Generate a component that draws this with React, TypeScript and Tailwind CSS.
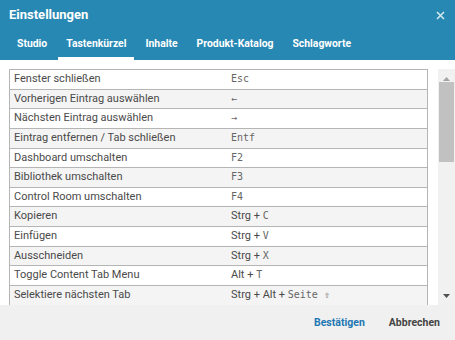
const shortcuts: { label: string; keys: React.ReactNode }[] = [
  { label: "Fenster schließen", keys: <span className="font-mono">Esc</span> },
  { label: "Vorherigen Eintrag auswählen", keys: <span className="font-mono">←</span> },
  { label: "Nächsten Eintrag auswählen", keys: <span className="font-mono">→</span> },
  { label: "Eintrag entfernen / Tab schließen", keys: <span className="font-mono">Entf</span> },
  { label: "Dashboard umschalten", keys: <span className="font-mono">F2</span> },
  { label: "Bibliothek umschalten", keys: <span className="font-mono">F3</span> },
  { label: "Control Room umschalten", keys: <span className="font-mono">F4</span> },
  { label: "Kopieren", keys: <>Strg + <span className="font-mono">C</span></> },
  { label: "Einfügen", keys: <>Strg + <span className="font-mono">V</span></> },
  { label: "Ausschneiden", keys: <>Strg + <span className="font-mono">X</span></> },
  { label: "Toggle Content Tab Menu", keys: <>Alt + <span className="font-mono">T</span></> },
  { label: "Selektiere nächsten Tab", keys: <>Strg + Alt + <span className="font-mono">Seite ⇧</span></> },
  { label: "", keys: null },
];

const tabs = ["Studio", "Tastenkürzel", "Inhalte", "Produkt-Katalog", "Schlagworte"];

export default function App() {
  return (
    <div className="flex h-[340px] w-[455px] flex-col overflow-hidden bg-white font-['Roboto',sans-serif] [&_.font-mono]:font-['DejaVu_Sans_Mono',monospace] [&_.font-mono]:text-[10px] [&_.font-mono]:text-[#666]">
      <div className="bg-[#2788b3] text-white">
        <div className="flex h-[30px] items-center justify-between pl-[9px] pr-[10px]">
          <span className="text-[13px] font-bold">Einstellungen</span>
          <svg width="9" height="9" viewBox="0 0 9 9" className="opacity-80">
            <path d="M1 1L8 8M8 1L1 8" stroke="white" strokeWidth="1.6" />
          </svg>
        </div>
        <div className="flex h-[30px] gap-[3px] pl-[9px]">
          {tabs.map((t) => (
            <div
              key={t}
              className={`flex items-center border-b-[3px] px-[8px] pt-[1px] text-[10.4px] font-bold ${
                t === "Tastenkürzel" ? "border-white" : "border-transparent"
              }`}
            >
              {t}
            </div>
          ))}
        </div>
      </div>

      <div className="flex min-h-0 flex-1">
        <div className="min-w-0 flex-1 overflow-hidden pl-[9px] pr-[10px] pt-[9px]">
          <div className="border-t border-l border-r border-[#b5b5b5]">
            {shortcuts.map((s, i) => (
              <div
                key={i}
                className={`flex h-[19.64px] items-center border-b border-[#b5b5b5] text-[11px] text-[#4a4a4a] ${
                  i % 2 === 1 ? "bg-[#f4f4f4]" : "bg-white"
                }`}
              >
                <div className="w-[221px] pl-[4px]">{s.label}</div>
                <div className="flex-1">{s.keys}</div>
              </div>
            ))}
          </div>
        </div>
        <div className="mt-[9px] flex w-[17px] flex-col bg-[#f1f1f1]">
          <div className="flex h-[12px] items-end justify-center">
            <svg width="7" height="4" viewBox="0 0 7 4">
              <path d="M0 4L3.5 0L7 4Z" fill="#a3a3a3" />
            </svg>
          </div>
          <div className="mx-[1px] mt-[1px] h-[80px] bg-[#c1c1c1]" />
          <div className="flex-1" />
          <div className="flex h-[14px] items-start justify-center pt-[3px]">
            <svg width="7" height="4" viewBox="0 0 7 4">
              <path d="M0 0L3.5 4L7 0Z" fill="#505050" />
            </svg>
          </div>
        </div>
      </div>

      <div className="flex h-[35px] items-center justify-end gap-[24px] bg-[#f0f0f0] pr-[15px] text-[10.5px] font-bold">
        <span className="text-[#2277b3]">Bestätigen</span>
        <span className="text-[#444]">Abbrechen</span>
      </div>
    </div>
  );
}
